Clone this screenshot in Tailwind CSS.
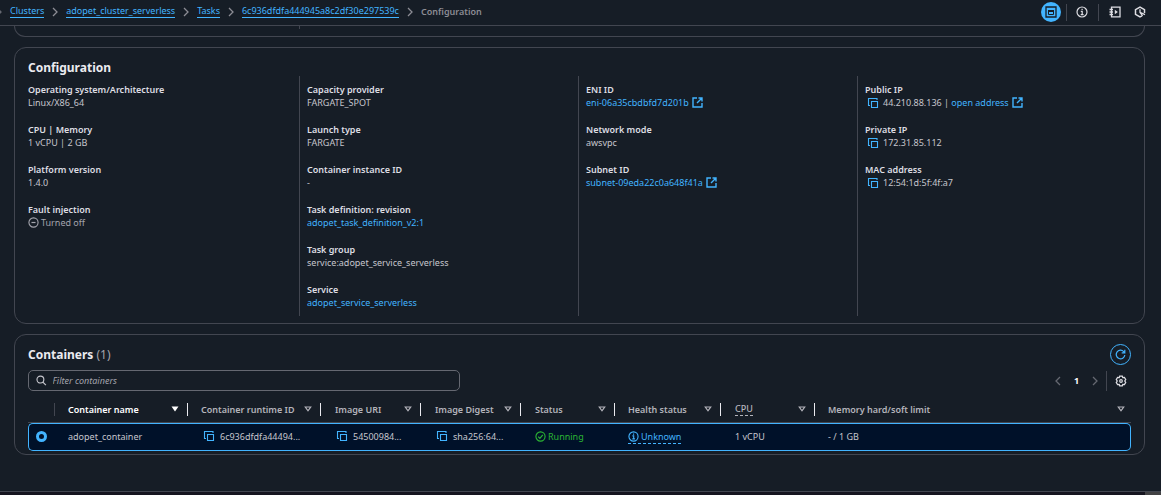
<!DOCTYPE html>
<html lang="en">
<head>
<meta charset="utf-8">
<title>Configuration</title>
<script src="https://cdn.jsdelivr.net/npm/@tailwindcss/browser@4"></script>
</head>
<body class="flex min-h-screen flex-col bg-[#161d26] font-['Noto_Sans','Open_Sans',sans-serif] text-[9px] leading-[13px] text-[#c6c6cd]">
<svg class="hidden">
  <symbol id="copy" viewBox="0 0 12 12"><path d="M3 8.500H1.500V1.500H10V3M4.500 4.500h6v6h-6z" fill="none" stroke="currentColor" stroke-width="1.100"/></symbol>
  <symbol id="ext" viewBox="0 0 11 11"><path d="M5 1H1v9h9V6M6.500 1H10v3.500M9.500 1.500L5 6" fill="none" stroke="currentColor" stroke-width="1.400"/></symbol>
  <symbol id="right" viewBox="0 0 6 10"><path d="M1 1l4 4-4 4" fill="none" stroke="currentColor" stroke-width="1.300"/></symbol>
  <symbol id="tri" viewBox="0 0 8 6"><path d="M1.300 1h5.400L4 4.800z" fill="none" stroke="currentColor" stroke-width="1.200"/></symbol>
  <symbol id="info" viewBox="0 0 12 12"><circle cx="6" cy="6" r="5" fill="none" stroke="currentColor" stroke-width="1.200"/><path d="M4.800 5.300h1.400V8.500M4.700 8.600h2.900M5.500 3.400h1.200" fill="none" stroke="currentColor" stroke-width="1.200"/></symbol>
</svg>

<header class="flex h-[26px] items-start justify-between border-b border-[#424650] pr-[15px]">
  <nav aria-label="Breadcrumb" class="pt-[5px]">
    <ol class="flex items-center">
      <li class="flex w-[10px] items-center"><svg class="-ml-1 h-2.5 w-1.5 text-[#656871]"><use href="#right"/></svg></li>
      <li class="flex items-center"><a href="#" class="border-b border-[#42b4ff] leading-3 text-[#42b4ff]">Clusters</a><svg class="mx-2 h-2.5 w-1.5 text-[#8c8c94]"><use href="#right"/></svg></li>
      <li class="flex items-center"><a href="#" class="border-b border-[#42b4ff] leading-3 text-[#42b4ff]">adopet_cluster_serverless</a><svg class="mx-2 h-2.5 w-1.5 text-[#8c8c94]"><use href="#right"/></svg></li>
      <li class="flex items-center"><a href="#" class="border-b border-[#42b4ff] leading-3 text-[#42b4ff]">Tasks</a><svg class="mx-2 h-2.5 w-1.5 text-[#8c8c94]"><use href="#right"/></svg></li>
      <li class="flex items-center"><a href="#" class="border-b border-[#42b4ff] leading-3 text-[#42b4ff]">6c936dfdfa444945a8c2df30e297539c</a><svg class="mx-2 h-2.5 w-1.5 text-[#8c8c94]"><use href="#right"/></svg></li>
      <li class="font-semibold text-[#8c8c94]" aria-current="page">Configuration</li>
    </ol>
  </nav>
  <div class="flex items-center pt-0.5 text-[#dedee3]">
    <button aria-label="Split panel" class="grid size-5 place-items-center rounded-full bg-[#42b4ff] text-[#161d26]"><svg class="size-3" viewBox="0 0 12 12"><path d="M1 1h10v10H1z" fill="none" stroke="currentColor" stroke-width="1.300"/><path d="M3.500 4.500h5v4h-5z" fill="none" stroke="currentColor"/><path d="M3 4h6v2H3z" fill="currentColor"/></svg></button>
    <span class="ml-[5px] h-[17px] w-px bg-[#424650]"></span>
    <button aria-label="Info" class="ml-[9px]"><svg class="size-3"><use href="#info"/></svg></button>
    <span class="ml-[10px] h-[17px] w-px bg-[#424650]"></span>
    <button aria-label="Tutorials" class="ml-[10px]"><svg class="size-3" viewBox="0 0 12 12"><path d="M2.500 1.200h8.500v9.600H2.500zM.5 3.500h3.500M.5 6h3.500M.5 8.500h3.500" fill="none" stroke="currentColor" stroke-width="1.300"/><path d="M5.800 3.800v4.400L8.900 6z" fill="currentColor"/></svg></button>
    <button aria-label="Recent activity" class="ml-[13px]"><svg class="size-3" viewBox="0 0 12 12"><path d="M10.500 7V3.600L6 1 1.500 3.600v4.800L6 11l2-1.100" fill="none" stroke="currentColor" stroke-width="1.500"/><path d="M6 3.300v3l5 2.300M6 6.300l2.600 3.600" fill="none" stroke="currentColor" stroke-width="1.300"/></svg></button>
  </div>
</header>

<main class="flex grow flex-col gap-[10px] pr-4 pl-[14px]">
  <div class="h-[11px] rounded-b-xl border border-t-0 border-[#424650] pl-[284px]"><div class="h-[3px] w-px bg-[#424650]"></div></div>

  <section class="rounded-xl border border-[#424650] pr-2 pb-[7px] pl-[5px]">
    <h2 class="px-2 pt-[11px] text-[12px] leading-[17px] font-bold text-[#ebebf0]">Configuration</h2>
    <div class="grid grid-cols-4">
      <dl class="flex flex-col gap-[14px] py-[7px] pl-2">
        <div><dt class="font-semibold text-[#dedee3]">Operating system/Architecture</dt><dd>Linux/X86_64</dd></div>
        <div><dt class="font-semibold text-[#dedee3]">CPU | Memory</dt><dd>1 vCPU | 2 GB</dd></div>
        <div><dt class="font-semibold text-[#dedee3]">Platform version</dt><dd>1.4.0</dd></div>
        <div><dt class="font-semibold text-[#dedee3]">Fault injection</dt><dd class="flex items-center gap-0.5 text-[#a4a4ad]"><svg class="size-[11px]" viewBox="0 0 12 12"><path d="M3.800 6h4.400" stroke="currentColor" stroke-width="1.300"/><circle cx="6" cy="6" r="5" fill="none" stroke="currentColor" stroke-width="1.200"/></svg>Turned off</dd></div>
      </dl>
      <dl class="flex flex-col gap-[14px] border-l border-[#424650] py-[7px] pl-[7px]">
        <div><dt class="font-semibold text-[#dedee3]">Capacity provider</dt><dd>FARGATE_SPOT</dd></div>
        <div><dt class="font-semibold text-[#dedee3]">Launch type</dt><dd>FARGATE</dd></div>
        <div><dt class="font-semibold text-[#dedee3]">Container instance ID</dt><dd>-</dd></div>
        <div><dt class="font-semibold text-[#dedee3]">Task definition: revision</dt><dd><a href="#" class="text-[#42b4ff]">adopet_task_definition_v2:1</a></dd></div>
        <div><dt class="font-semibold text-[#dedee3]">Task group</dt><dd>service:adopet_service_serverless</dd></div>
        <div><dt class="font-semibold text-[#dedee3]">Service</dt><dd><a href="#" class="text-[#42b4ff]">adopet_service_serverless</a></dd></div>
      </dl>
      <dl class="flex flex-col gap-[14px] border-l border-[#424650] py-[7px] pl-[7px]">
        <div><dt class="font-semibold text-[#dedee3]">ENI ID</dt><dd><a href="#" class="flex items-center gap-[3px] text-[#42b4ff]">eni-06a35cbdbfd7d201b<svg class="size-[11px]"><use href="#ext"/></svg></a></dd></div>
        <div><dt class="font-semibold text-[#dedee3]">Network mode</dt><dd>awsvpc</dd></div>
        <div><dt class="font-semibold text-[#dedee3]">Subnet ID</dt><dd><a href="#" class="flex items-center gap-[3px] text-[#42b4ff]">subnet-09eda22c0a648f41a<svg class="size-[11px]"><use href="#ext"/></svg></a></dd></div>
      </dl>
      <dl class="flex flex-col gap-[14px] border-l border-[#424650] py-[7px] pl-[7px]">
        <div><dt class="font-semibold text-[#dedee3]">Public IP</dt><dd class="flex items-center pl-0.5"><button aria-label="Copy public IP" class="mr-1 text-[#42b4ff]"><svg class="size-3"><use href="#copy"/></svg></button><span class="whitespace-pre">44.210.88.136 | </span><a href="#" class="flex items-center gap-[3px] text-[#42b4ff]">open address<svg class="size-[11px]"><use href="#ext"/></svg></a></dd></div>
        <div><dt class="font-semibold text-[#dedee3]">Private IP</dt><dd class="flex items-center pl-0.5"><button aria-label="Copy private IP" class="mr-1 text-[#42b4ff]"><svg class="size-3"><use href="#copy"/></svg></button>172.31.85.112</dd></div>
        <div><dt class="font-semibold text-[#dedee3]">MAC address</dt><dd class="flex items-center pl-0.5"><button aria-label="Copy MAC address" class="mr-1 text-[#42b4ff]"><svg class="size-3"><use href="#copy"/></svg></button>12:54:1d:5f:4f:a7</dd></div>
      </dl>
    </div>
  </section>

  <section class="rounded-xl border border-[#424650] px-[13px] pt-[9px] pb-[3px]">
    <div class="flex items-center justify-between">
      <h2 class="text-[12px] leading-[17px] font-bold text-[#ebebf0]">Containers <span class="font-normal text-[#a4a4ad]">(1)</span></h2>
      <button aria-label="Refresh" class="grid size-[21px] place-items-center rounded-full border border-[#42b4ff] text-[#42b4ff]"><svg class="size-[11px]" viewBox="0 0 12 12"><path d="M10.700 6.500A4.700 4.700 0 1 1 9.500 2.800L10.600 4M10.700.8v3.400H7.300" fill="none" stroke="currentColor" stroke-width="1.300"/></svg></button>
    </div>
    <div class="mt-[5px] flex items-center justify-between">
      <label class="flex h-[21px] w-[432px] items-center rounded-[5px] border border-[#656871] pl-[7px]">
        <svg class="mr-1.5 size-[11px] text-[#c6c6cd]" viewBox="0 0 12 12"><circle cx="5" cy="5" r="3.900" fill="none" stroke="currentColor" stroke-width="1.300"/><path d="M7.800 7.800L11.200 11.200" stroke="currentColor" stroke-width="1.400"/></svg>
        <input type="text" aria-label="Filter containers" placeholder="Filter containers" class="w-full bg-transparent outline-none placeholder:text-[#a4a4ad] placeholder:italic">
      </label>
      <div class="flex items-center pr-1">
        <button aria-label="Previous page" class="text-[#656871]"><svg class="h-2.5 w-1.5 rotate-180"><use href="#right"/></svg></button>
        <button class="w-[31px] text-center font-bold text-white">1</button>
        <button aria-label="Next page" class="text-[#656871]"><svg class="h-2.5 w-1.5"><use href="#right"/></svg></button>
        <span class="ml-[8px] h-5 w-px bg-[#424650]"></span>
        <button aria-label="Preferences" class="ml-2 text-[#dedee3]"><svg class="size-3" viewBox="0 0 12 12"><path d="M4.700 1.200h2.600l.5 1.400 1.600-.2 1.300 2.100L9.800 6l.9 1.500-1.300 2.100-1.600-.2-.5 1.400H4.700l-.5-1.400-1.600.2-1.300-2.100L2.200 6l-.9-1.500 1.300-2.100 1.600.2z" fill="none" stroke="currentColor" stroke-width="1.300"/><circle cx="6" cy="6" r="1.300" fill="none" stroke="currentColor" stroke-width="1.200"/></svg></button>
      </div>
    </div>
    <table class="mt-[5px] w-full table-fixed border-separate border-spacing-0 text-left">
      <colgroup><col class="w-[27px]"><col class="w-[133px]"><col class="w-[133px]"><col class="w-[100px]"><col class="w-[100px]"><col class="w-[94px]"><col class="w-[106px]"><col class="w-[94px]"><col></colgroup>
      <thead>
        <tr class="h-[27px] text-[#b4b4bb]">
          <th aria-label="Selection" class="border-b border-[#424650] p-0"><div class="h-[13px] border-r border-[#424650]"></div></th>
          <th class="border-b border-[#424650] p-0 font-semibold text-white"><div class="flex items-center justify-between border-r border-[#ebebf0] pr-2 pl-[13px]">Container name<button aria-label="Sort by container name"><svg class="h-1.5 w-2" viewBox="0 0 8 6"><path d="M.5.500h7L4 5.500z" fill="currentColor"/></svg></button></div></th>
          <th class="border-b border-[#424650] p-0 font-semibold"><div class="flex items-center justify-between border-r border-[#ebebf0] pr-2 pl-[13px]">Container runtime ID<button aria-label="Sort by runtime ID"><svg class="h-1.5 w-2"><use href="#tri"/></svg></button></div></th>
          <th class="border-b border-[#424650] p-0 font-semibold"><div class="flex items-center justify-between border-r border-[#ebebf0] pr-2 pl-[14px]">Image URI<button aria-label="Sort by image URI"><svg class="h-1.5 w-2"><use href="#tri"/></svg></button></div></th>
          <th class="border-b border-[#424650] p-0 font-semibold"><div class="flex items-center justify-between border-r border-[#ebebf0] pr-2 pl-[14px]">Image Digest<button aria-label="Sort by image digest"><svg class="h-1.5 w-2"><use href="#tri"/></svg></button></div></th>
          <th class="border-b border-[#424650] p-0 font-semibold"><div class="flex items-center justify-between border-r border-[#ebebf0] pr-2 pl-[14px]">Status<button aria-label="Sort by status"><svg class="h-1.5 w-2"><use href="#tri"/></svg></button></div></th>
          <th class="border-b border-[#424650] p-0 font-semibold"><div class="flex items-center justify-between border-r border-[#ebebf0] pr-2 pl-[13px]">Health status<button aria-label="Sort by health status"><svg class="h-1.5 w-2"><use href="#tri"/></svg></button></div></th>
          <th class="border-b border-[#424650] p-0 font-semibold"><div class="flex h-[13px] items-center justify-between border-r border-[#ebebf0] pr-2 pl-[14px]"><span class="border-b border-dashed border-current leading-3 font-medium">CPU</span><button aria-label="Sort by CPU"><svg class="h-1.5 w-2"><use href="#tri"/></svg></button></div></th>
          <th class="border-b border-[#424650] p-0 font-semibold"><div class="flex items-center justify-between pr-1.5 pl-[13px]">Memory hard/soft limit<button aria-label="Sort by memory limit"><svg class="h-1.5 w-2"><use href="#tri"/></svg></button></div></th>
        </tr>
      </thead>
      <tbody>
        <tr class="h-7">
          <td class="rounded-l-[5px] border-y border-l border-[#42b4ff] bg-[#001129] p-0 pb-0.5 pl-[7px]"><input type="radio" name="container" checked aria-label="Select adopet_container" class="block size-[11px] appearance-none rounded-full border-[#42b4ff] bg-[#001129] checked:border-3"></td>
          <td class="border-y border-[#42b4ff] bg-[#001129] p-0 pb-0.5 pl-[13px]">adopet_container</td>
          <td class="border-y border-[#42b4ff] bg-[#001129] p-0 pb-0.5 pl-[15px]"><div class="flex items-center gap-[5px]"><button aria-label="Copy runtime ID" class="text-[#42b4ff]"><svg class="size-3"><use href="#copy"/></svg></button>6c936dfdfa44494...</div></td>
          <td class="border-y border-[#42b4ff] bg-[#001129] p-0 pb-0.5 pl-[15px]"><div class="flex items-center gap-[5px]"><button aria-label="Copy image URI" class="text-[#42b4ff]"><svg class="size-3"><use href="#copy"/></svg></button>54500984...</div></td>
          <td class="border-y border-[#42b4ff] bg-[#001129] p-0 pb-0.5 pl-[15px]"><div class="flex items-center gap-[5px]"><button aria-label="Copy image digest" class="text-[#42b4ff]"><svg class="size-3"><use href="#copy"/></svg></button>sha256:64...</div></td>
          <td class="border-y border-[#42b4ff] bg-[#001129] p-0 pb-0.5 pl-[14px]"><div class="flex items-center gap-0.5 text-[#2bb534]"><svg class="size-[11px]" viewBox="0 0 12 12"><path d="M3.500 6.200l1.800 1.800 3.200-3.800" fill="none" stroke="currentColor" stroke-width="1.300"/><circle cx="6" cy="6" r="5" fill="none" stroke="currentColor" stroke-width="1.200"/></svg>Running</div></td>
          <td class="border-y border-[#42b4ff] bg-[#001129] p-0 pl-[13px]"><button class="flex items-center gap-0.5 border-b border-dashed border-[#42b4ff] text-[#42b4ff]"><svg class="size-[11px]"><use href="#info"/></svg>Unknown</button></td>
          <td class="border-y border-[#42b4ff] bg-[#001129] p-0 pb-0.5 pl-[14px]">1 vCPU</td>
          <td class="rounded-r-[5px] border-y border-r border-[#42b4ff] bg-[#001129] p-0 pb-0.5 pl-[13px]">- / 1 GB</td>
        </tr>
      </tbody>
    </table>
  </section>
</main>
<footer class="flex h-1 justify-end border-t border-[#424650] bg-[#161520]"><div class="h-full w-4 bg-[#424244]"></div></footer>
</body>
</html>
